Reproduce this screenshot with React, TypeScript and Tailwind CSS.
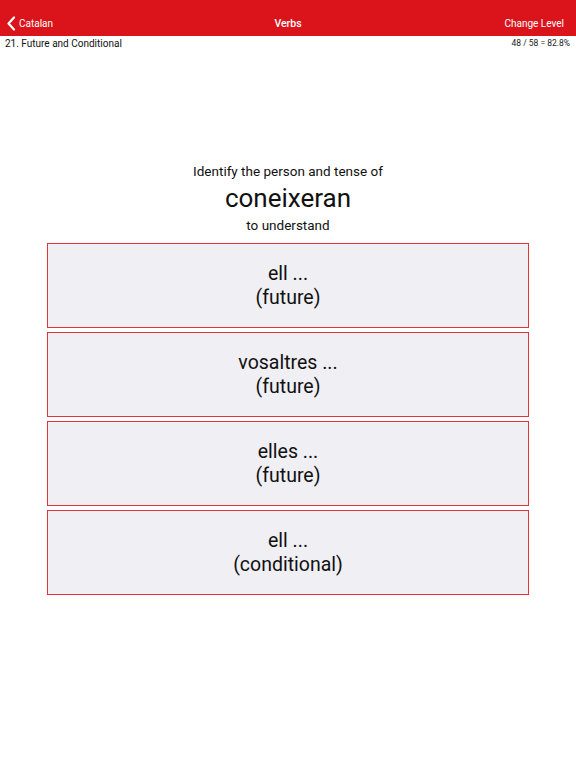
import React from "react";

const options = [
  ["ell ...", "(future)"],
  ["vosaltres ...", "(future)"],
  ["elles ...", "(future)"],
  ["ell ...", "(conditional)"],
];

export default function App() {
  return (
    <div
      className="w-[576px] h-[768px] bg-white flex flex-col"
      style={{ fontFamily: "Roboto, Inter, 'Liberation Sans', sans-serif" }}
    >
      <div className="h-[36px] bg-[#db141b] flex items-center justify-between px-[6px] pt-[11px] text-white">
        <div className="flex items-center gap-[3px] w-[150px]">
          <svg width="10" height="15" viewBox="0 0 10 15" fill="none">
            <path d="M8 1.5L2.5 7.5L8 13.5" stroke="white" strokeWidth="2.2" strokeLinecap="round" strokeLinejoin="round" />
          </svg>
          <span className="text-[10px]">Catalan</span>
        </div>
        <span className="text-[10.5px] font-medium">Verbs</span>
        <div className="w-[150px] text-right pr-[6px] text-[10px]">Change Level</div>
      </div>
      <div className="flex items-center justify-between px-[5px] h-[13px] mt-[1px]">
        <span className="text-[10px] text-[#111] leading-none">21. Future and Conditional</span>
        <span className="text-[8.5px] text-[#222] leading-none pr-[1px]">48 / 58 = 82.8%</span>
      </div>
      <div className="flex flex-col items-center mt-[113px]">
        <div className="text-[13.5px] text-[#111] leading-[16px]">Identify the person and tense of</div>
        <div className="text-[26px] text-[#111] leading-[32px] mt-[3px]">coneixeran</div>
        <div className="text-[13.5px] text-[#111] leading-[16px] mt-[3px]">to understand</div>
      </div>
      <div className="flex flex-col gap-[4px] mt-[10px] ml-[47px] w-[482px]">
        {options.map((o, i) => (
          <div
            key={i}
            className="h-[85px] bg-[#efeff4] border border-[#e3333c] flex flex-col items-center justify-center text-[19.5px] leading-[24px] text-[#111]"
          >
            <div>{o[0]}</div>
            <div>{o[1]}</div>
          </div>
        ))}
      </div>
    </div>
  );
}
